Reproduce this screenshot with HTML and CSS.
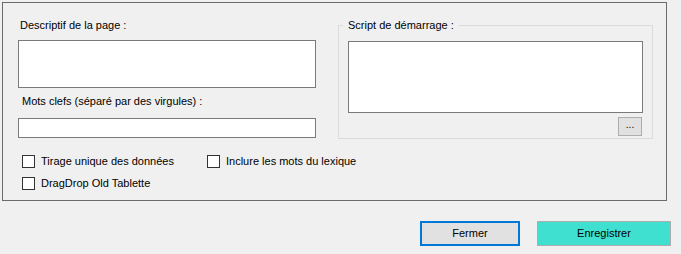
FILE: index.html
```html
<!DOCTYPE html>
<html lang="fr">
<head>
  <meta charset="UTF-8" />
  <title>Propriétés de la page</title>
  <link rel="stylesheet" href="styles.css">
</head>
<body>

  <div class="panel">
    <div class="top">
      <div class="left-col">
        <label class="label desc-label" for="desc">Descriptif de la page :</label>
        <textarea id="desc" class="desc"></textarea>
        <label class="label kw-label" for="kw">Mots clefs (séparé par des virgules) :</label>
        <input id="kw" class="kw" type="text">
      </div>

      <fieldset class="group">
        <legend>Script de démarrage :</legend>
        <textarea class="script"></textarea>
        <div class="browse-row">
          <button class="browse" type="button">...</button>
        </div>
      </fieldset>
    </div>

    <div class="checks">
      <label class="check"><input type="checkbox"><span>Tirage unique des données</span></label>
      <label class="check"><input type="checkbox"><span>Inclure les mots du lexique</span></label>
      <label class="check"><input type="checkbox"><span>DragDrop Old Tablette</span></label>
    </div>
  </div>

  <div class="actions">
    <button class="btn btn-close" type="button">Fermer</button>
    <button class="btn btn-save" type="button">Enregistrer</button>
  </div>

</body>
</html>
```

FILE: styles.css
```css
* {
  box-sizing: border-box;
}

body {
  margin: 0;
  background: #f0f0f0;
  color: #000;
  font-family: 'Liberation Sans', Arial, sans-serif;
  font-size: 11px;
  line-height: 13px;
}

.panel {
  width: 665px;
  height: 199px;
  margin: 2px 0 0 2px;
  border: 1px solid #6b6b6b;
  padding: 16px 0 0 15px;
}

.top {
  display: flex;
  gap: 22px;
}

.left-col {
  width: 298px;
  display: flex;
  flex-direction: column;
}

.label {
  display: block;
  height: 13px;
}

.desc-label {
  margin-left: 2px;
}

.field {
  display: block;
}

textarea,
input[type="text"] {
  display: block;
  margin: 0;
  padding: 0;
  border: 1px solid #7a7a7a;
  background: #fff;
  resize: none;
  font: inherit;
  outline: none;
}

.left-col .desc {
  width: 298px;
  height: 48px;
  margin-top: 8px;
}

.kw-label {
  margin: 7px 0 0 4px;
}

.left-col .kw {
  width: 298px;
  height: 20px;
  margin-top: 10px;
}

.group {
  width: 315px;
  height: 120px;
  margin: 0;
  min-width: 0;
  padding: 0 9px 0 4px;
  border: 1px solid #dcdcdc;
}

.group legend {
  padding: 0 5px;
  line-height: 13px;
}

.group .script {
  width: 295px;
  height: 72px;
  margin: 9px 0 0 5px;
}

.browse-row {
  display: flex;
  justify-content: flex-end;
  padding-right: 1px;
}

.browse {
  width: 24px;
  height: 19px;
  margin-top: 4px;
  padding: 0 0 3px;
  border: 1px solid #adadad;
  background: #e1e1e1;
  font: inherit;
  font-size: 10px;
  line-height: 10px;
  color: #000;
}

.checks {
  display: grid;
  grid-template-columns: 185px auto;
  row-gap: 9px;
  margin: 16px 0 0 4px;
}

.check {
  display: flex;
  align-items: center;
  height: 13px;
}

.check input {
  appearance: none;
  -webkit-appearance: none;
  width: 13px;
  height: 13px;
  margin: 0 6px 0 0;
  border: 1px solid #333;
  background: #fff;
}

.actions {
  display: flex;
  justify-content: flex-end;
  gap: 17px;
  margin-top: 20px;
  padding-right: 10px;
}

.btn {
  height: 25px;
  margin: 0;
  padding: 0;
  font: inherit;
  color: #000;
}

.btn-close {
  width: 100px;
  border: 2px solid #0078d7;
  background: #e1e1e1;
}

.btn-save {
  width: 134px;
  border: 1px solid #adadad;
  background: #40e0d0;
}
```
